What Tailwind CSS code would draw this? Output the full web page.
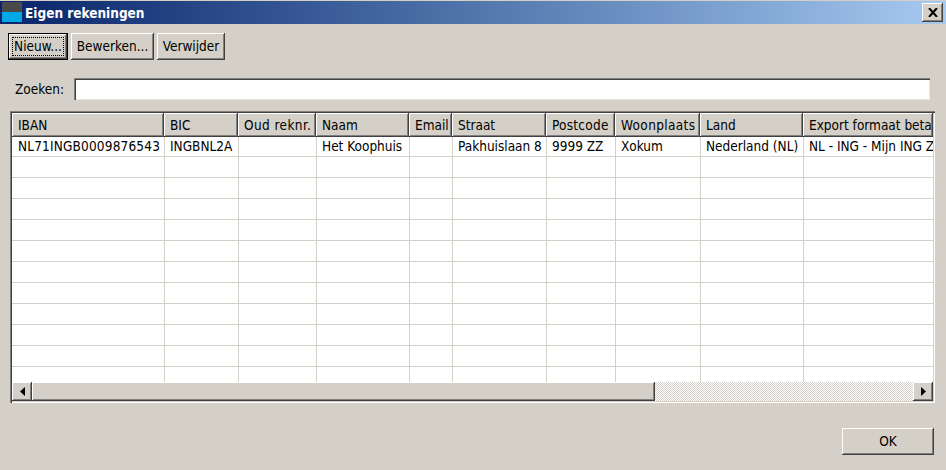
<!DOCTYPE html>
<html>
<head>
<meta charset="utf-8">
<script src="https://cdn.jsdelivr.net/npm/@tailwindcss/browser@4"></script>
</head>
<body class="m-0 w-[946px] h-[470px] overflow-hidden bg-[#d4d0c8] text-black font-['DejaVu_Sans_Condensed','DejaVu_Sans',sans-serif] [font-stretch:condensed] text-[13.5px] leading-none">
<div class="h-[1px] bg-[#d4d0c8]"></div>
<div class="h-[23px] flex items-center bg-gradient-to-r from-[#0a246a] to-[#a6caf0] pl-[2px] pr-[3px]">
  <div class="w-[20px] h-[20px] -mt-[1px] flex flex-col">
    <div class="h-[10px] bg-[#4a4a4a]"></div>
    <div class="h-[10px] bg-[#00a8e8]"></div>
  </div>
  <span class="ml-[3px] pt-[2px] text-white font-bold text-[13.5px]">Eigen rekeningen</span>
  <div class="ml-auto w-[21px] h-[19px] bg-[#d4d0c8] flex items-center justify-center shadow-[inset_-1px_-1px_0_#404040,inset_1px_1px_0_#fff,inset_-2px_-2px_0_#808080]">
    <svg width="10" height="9" viewBox="0 0 10 9"><path d="M1 0L9 9M9 0L1 9" stroke="#000" stroke-width="2" fill="none"/></svg>
  </div>
</div>
<div class="flex gap-[3px] pl-[8px] mt-[9px]">
  <button class="w-[60px] h-[27px] relative flex items-center justify-center border border-black shadow-[inset_-1px_-1px_0_#404040,inset_1px_1px_0_#fff,inset_-2px_-2px_0_#808080]">Nieuw...<span class="absolute inset-[3px] border border-dotted border-black"></span></button>
  <button class="w-[83px] h-[27px] flex items-center justify-center shadow-[inset_-1px_-1px_0_#404040,inset_1px_1px_0_#fff,inset_-2px_-2px_0_#808080]">Bewerken...</button>
  <button class="w-[68px] h-[27px] flex items-center justify-center shadow-[inset_-1px_-1px_0_#404040,inset_1px_1px_0_#fff,inset_-2px_-2px_0_#808080]">Verwijder</button>
</div>
<div class="flex items-center pl-[15px] mt-[18px]">
  <span class="w-[59px] pt-[2px]">Zoeken:</span>
  <div class="w-[856px] h-[22px] bg-white shadow-[inset_1px_1px_0_#808080,inset_2px_2px_0_#404040,inset_-1px_-1px_0_#e8e5df]"></div>
</div>
<div class="ml-[10px] mt-[11px] w-[925px] h-[292px] p-[2px] flex flex-col shadow-[inset_1px_1px_0_#808080,inset_2px_2px_0_#404040,inset_-1px_-1px_0_#fff,inset_-2px_-2px_0_#d4d0c8]">
  <div class="flex-1 bg-white overflow-hidden flex flex-col">
    <div class="flex h-[24px] shrink-0">
      <div class="w-[152px] h-[24px] pl-[6px] pt-[1px] flex items-center shadow-[inset_-1px_-1px_0_#404040,inset_1px_1px_0_#fff,inset_-2px_-2px_0_#808080] bg-[#d4d0c8]">IBAN</div>
      <div class="w-[74px] h-[24px] pl-[6px] pt-[1px] flex items-center shadow-[inset_-1px_-1px_0_#404040,inset_1px_1px_0_#fff,inset_-2px_-2px_0_#808080] bg-[#d4d0c8]">BIC</div>
      <div class="w-[78px] h-[24px] pl-[6px] pt-[1px] flex items-center tracking-[0.4px] shadow-[inset_-1px_-1px_0_#404040,inset_1px_1px_0_#fff,inset_-2px_-2px_0_#808080] bg-[#d4d0c8]">Oud reknr.</div>
      <div class="w-[93px] h-[24px] pl-[6px] pt-[1px] flex items-center shadow-[inset_-1px_-1px_0_#404040,inset_1px_1px_0_#fff,inset_-2px_-2px_0_#808080] bg-[#d4d0c8]">Naam</div>
      <div class="w-[43px] h-[24px] pl-[6px] pt-[1px] flex items-center shadow-[inset_-1px_-1px_0_#404040,inset_1px_1px_0_#fff,inset_-2px_-2px_0_#808080] bg-[#d4d0c8]">Email</div>
      <div class="w-[94px] h-[24px] pl-[6px] pt-[1px] flex items-center shadow-[inset_-1px_-1px_0_#404040,inset_1px_1px_0_#fff,inset_-2px_-2px_0_#808080] bg-[#d4d0c8]">Straat</div>
      <div class="w-[69px] h-[24px] pl-[6px] pt-[1px] flex items-center tracking-[0.25px] shadow-[inset_-1px_-1px_0_#404040,inset_1px_1px_0_#fff,inset_-2px_-2px_0_#808080] bg-[#d4d0c8]">Postcode</div>
      <div class="w-[85px] h-[24px] pl-[6px] pt-[1px] flex items-center tracking-[0.35px] shadow-[inset_-1px_-1px_0_#404040,inset_1px_1px_0_#fff,inset_-2px_-2px_0_#808080] bg-[#d4d0c8]">Woonplaats</div>
      <div class="w-[103px] h-[24px] pl-[6px] pt-[1px] flex items-center shadow-[inset_-1px_-1px_0_#404040,inset_1px_1px_0_#fff,inset_-2px_-2px_0_#808080] bg-[#d4d0c8]">Land</div>
      <div class="flex-1 h-[24px] pl-[6px] pt-[1px] flex items-center overflow-hidden whitespace-nowrap shadow-[inset_-1px_-1px_0_#404040,inset_1px_1px_0_#fff,inset_-2px_-2px_0_#808080] bg-[#d4d0c8]">Export formaat beta</div>
    </div>
    <div class="flex-1 flex flex-col overflow-hidden bg-[linear-gradient(#d4d0c8_1px,transparent_1px)] bg-[length:100%_21px] bg-[position:0_19px]">
      <div class="flex-1 flex">
        <div class="w-[153px] pl-[6px] pt-[3px] tracking-[0.17px] border-r border-[#d4d0c8] whitespace-nowrap">NL71INGB0009876543</div>
        <div class="w-[74px] pl-[5px] pt-[3px] border-r border-[#d4d0c8] whitespace-nowrap">INGBNL2A</div>
        <div class="w-[78px] pl-[6px] pt-[3px] border-r border-[#d4d0c8]"></div>
        <div class="w-[93px] pl-[5px] pt-[3px] border-r border-[#d4d0c8] whitespace-nowrap">Het Koophuis</div>
        <div class="w-[43px] pl-[6px] pt-[3px] border-r border-[#d4d0c8]"></div>
        <div class="w-[94px] pl-[5px] pt-[3px] border-r border-[#d4d0c8] whitespace-nowrap">Pakhuislaan 8</div>
        <div class="w-[69px] pl-[5px] pt-[3px] border-r border-[#d4d0c8] whitespace-nowrap">9999 ZZ</div>
        <div class="w-[85px] pl-[5px] pt-[3px] border-r border-[#d4d0c8] whitespace-nowrap">Xokum</div>
        <div class="w-[103px] pl-[5px] pt-[3px] border-r border-[#d4d0c8] whitespace-nowrap">Nederland (NL)</div>
        <div class="flex-1 pl-[5px] pt-[3px] overflow-hidden whitespace-nowrap">NL - ING - Mijn ING Z</div>
      </div>
    </div>
    <div class="flex h-[19px] shrink-0 bg-[#d4d0c8]">
      <div class="w-[20px] flex items-center justify-center shadow-[inset_-1px_-1px_0_#404040,inset_1px_1px_0_#fff,inset_-2px_-2px_0_#808080]"><svg width="5" height="9" viewBox="0 0 5 9"><path d="M5 0v9L0 4.500z" fill="#000"/></svg></div>
      <div class="w-[623px] shadow-[inset_-1px_-1px_0_#404040,inset_1px_1px_0_#fff,inset_-2px_-2px_0_#808080]"></div>
      <div class="flex-1 bg-[repeating-conic-gradient(#d4d0c8_0_25%,#fff_0_50%)] bg-[length:2px_2px]"></div>
      <div class="w-[20px] flex items-center justify-center shadow-[inset_-1px_-1px_0_#404040,inset_1px_1px_0_#fff,inset_-2px_-2px_0_#808080]"><svg width="5" height="9" viewBox="0 0 5 9"><path d="M0 0v9L5 4.500z" fill="#000"/></svg></div>
    </div>
  </div>
</div>
<div class="flex justify-end pr-[12px] mt-[25px]">
  <button class="w-[92px] h-[27px] flex items-center justify-center shadow-[inset_-1px_-1px_0_#404040,inset_1px_1px_0_#fff,inset_-2px_-2px_0_#808080]">OK</button>
</div>
</body>
</html>
